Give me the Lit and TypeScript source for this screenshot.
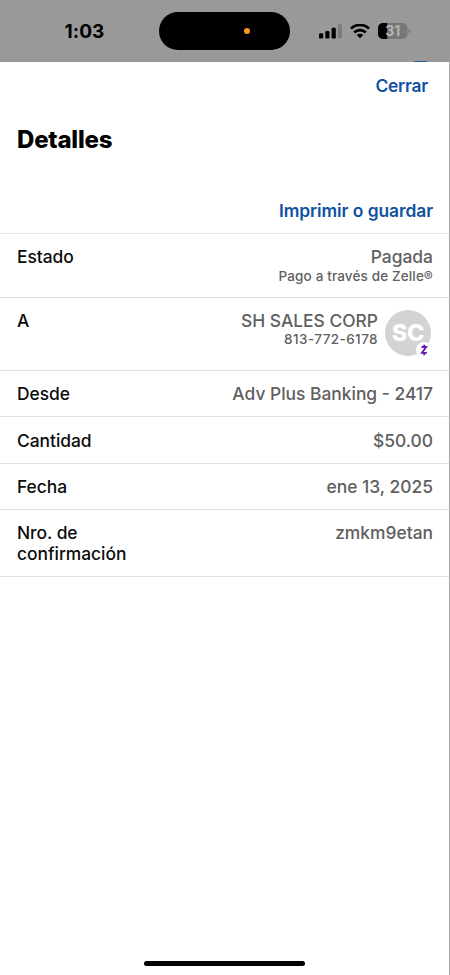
import {css, html, LitElement, nothing, svg} from 'lit';
import {customElement, property} from 'lit/decorators.js';

interface Detail {
    kind: string;
    label: string;
    value: string;
    note?: string;
    initials?: string;
}

const DETAILS: Detail[] = [
    {kind: 'status', label: 'Estado', value: 'Pagada', note: 'Pago a través de Zelle®'},
    {kind: 'recipient', label: 'A', value: 'SH SALES CORP', note: '813-772-6178', initials: 'SC'},
    {kind: 'account', label: 'Desde', value: 'Adv Plus Banking - 2417'},
    {kind: 'amount', label: 'Cantidad', value: '$50.00'},
    {kind: 'date', label: 'Fecha', value: 'ene 13, 2025'},
    {kind: 'confirmation', label: 'Nro. de confirmación', value: 'zmkm9etan'},
];

@customElement('status-bar')
class StatusBar extends LitElement {
    static styles = css`
        :host {
            display: grid;
            grid-template-columns: 159.4px 131px 1fr;
            align-items: center;
            height: 62px;
            box-sizing: border-box;
            background: #999;
            position: relative;
        }
        .time {
            padding: 1px 0 0 9.5px;
            text-align: center;
            font-size: 19px;
            font-weight: 700;
            line-height: 22px;
            letter-spacing: 0.1px;
            color: #000;
        }
        .island {
            height: 38px;
            border-radius: 19px;
            background: #000;
            display: flex;
            align-items: center;
            justify-content: flex-end;
            padding-right: 40px;
            box-sizing: border-box;
        }
        .dot {
            width: 6px;
            height: 6px;
            border-radius: 50%;
            background: #f79a20;
        }
        .icons {
            display: flex;
            align-items: center;
            gap: 8px;
            padding-left: 28.6px;
        }
        svg {
            display: block;
        }
        .level {
            font: 700 14px Inter, sans-serif;
        }
        .peek {
            position: absolute;
            right: 23px;
            bottom: 0;
            width: 13px;
            height: 1px;
            background: #2b5f9c;
        }
    `;

    render() {
        return html`
            <div class="time">1:03</div>
            <div class="island"><div class="dot"></div></div>
            <div class="icons">
                <svg width="23" height="15" viewBox="0 0 23 15">
                    <rect x="0" y="9.2" width="4.2" height="5.2" rx="1.2"/>
                    <rect x="6.3" y="7" width="4.2" height="7.4" rx="1.2"/>
                    <rect x="12.6" y="3.8" width="4.2" height="10.6" rx="1.2"/>
                    <rect x="18.8" y="0.2" width="4.2" height="14.2" rx="1.2" fill="#7c7c7c"/>
                </svg>
                <svg width="20" height="15" viewBox="0 0 20 15">
                    <g fill="none" stroke="#000" stroke-width="2.7">
                        <path d="M1 4.6A12.9 12.9 0 0 1 19 4.6"/>
                        <path d="M4.2 8.5A8.3 8.3 0 0 1 15.8 8.5"/>
                    </g>
                    <path d="M6.8 11.1a4.6 4.6 0 0 1 6.4 0L10 14.3z"/>
                </svg>
                <svg width="33" height="16" viewBox="0 0 33 16">
                    <rect width="29.5" height="16" rx="5" fill="#777"/>
                    <path d="M5 0H9.2V16H5A5 5 0 0 1 0 11V5A5 5 0 0 1 5 0Z"/>
                    <path d="M30.6 5.4c2.2 1 2.2 4.2 0 5.2z" fill="#777"/>
                    ${svg`<text class="level" x="14.8" y="13.1" text-anchor="middle" fill="#b4b4b4">31</text>`}
                </svg>
            </div>
            <div class="peek"></div>
        `;
    }
}

@customElement('contact-avatar')
class ContactAvatar extends LitElement {
    @property() initials = '';

    static styles = css`
        :host {
            display: grid;
            place-items: center;
            position: relative;
            width: 46px;
            height: 46px;
            border-radius: 50%;
            background: #d3d3d3;
            color: #fff;
            font-size: 23.5px;
            font-weight: 800;
        }
        .badge {
            position: absolute;
            right: -1px;
            bottom: -2px;
            width: 16px;
            height: 16px;
        }
    `;

    render() {
        return html`
            <span>${this.initials}</span>
            <svg class="badge" viewBox="0 0 16 16">
                <circle cx="8" cy="8" r="8" fill="#fff"/>
                <path d="M5.5 5H10.2L5.9 10.9H10.9M8.2 2.8V5M8.2 10.9V13.2" fill="none" stroke="#6419b4" stroke-width="1.8"/>
            </svg>
        `;
    }
}

@customElement('app-root')
export class AppRoot extends LitElement {
    static styles = css`
        :host {
            display: flex;
            flex-direction: column;
            height: 975px;
            box-sizing: border-box;
            background: #fff;
            color: #0b0b0b;
            font-family: Inter, sans-serif;
            font-size: 17.4px;
            font-weight: 500;
            line-height: 20.7px;
            overflow: hidden;
        }
        .sheet {
            flex: 1;
            display: flex;
            flex-direction: column;
            border-right: 1px solid #a8a8a8;
        }
        button {
            border: 0;
            padding: 0;
            background: none;
            font: inherit;
            font-weight: 600;
            line-height: 21px;
            color: #0f52a0;
        }
        .close {
            align-self: flex-end;
            margin: 13px 21px 0 0;
            letter-spacing: -0.2px;
        }
        h1 {
            margin: 28px 0 0 17px;
            font-size: 24px;
            font-weight: 800;
            line-height: 31px;
            letter-spacing: -0.2px;
            color: #000;
        }
        .print {
            align-self: flex-end;
            margin: 45px 16px 12px 0;
            letter-spacing: -0.06px;
        }
        dl {
            margin: 0;
            border-top: 1px solid #e4e4e4;
        }
        .row {
            display: flex;
            justify-content: space-between;
            box-sizing: border-box;
            min-height: 46.4px;
            padding: 13px 16px 0 17px;
            border-bottom: 1px solid #e0e0e0;
        }
        .row.status {
            min-height: 64px;
        }
        .row.recipient {
            min-height: 73px;
            padding-right: 18px;
        }
        .row.amount {
            padding-top: 13.3px;
        }
        .row.confirmation {
            min-height: 66.8px;
        }
        dt {
            width: 130px;
            letter-spacing: -0.03px;
        }
        dd {
            display: flex;
            gap: 7px;
            margin: 0;
            text-align: right;
            color: #606060;
        }
        .note {
            font-size: 13.5px;
            line-height: 17px;
            letter-spacing: 0.14px;
        }
        .recipient .note {
            line-height: 15.6px;
            letter-spacing: 0.42px;
        }
        contact-avatar {
            margin-top: -1px;
            letter-spacing: -0.3px;
        }
        .home {
            align-self: center;
            width: 161px;
            height: 5px;
            margin: auto 0 9px;
            border-radius: 3px;
            background: #000;
        }
    `;

    renderDetail(detail: Detail) {
        return html`
            <div class="row ${detail.kind}">
                <dt>${detail.label}</dt>
                <dd>
                    <div>
                        <div class="value">${detail.value}</div>
                        ${detail.note ? html`<div class="note">${detail.note}</div>` : nothing}
                    </div>
                    ${detail.initials ? html`<contact-avatar initials=${detail.initials}></contact-avatar>` : nothing}
                </dd>
            </div>
        `;
    }

    render() {
        return html`
            <status-bar></status-bar>
            <main class="sheet">
                <button class="close">Cerrar</button>
                <h1>Detalles</h1>
                <button class="print">Imprimir o guardar</button>
                <dl>${DETAILS.map((detail) => this.renderDetail(detail))}</dl>
                <div class="home"></div>
            </main>
        `;
    }
}
